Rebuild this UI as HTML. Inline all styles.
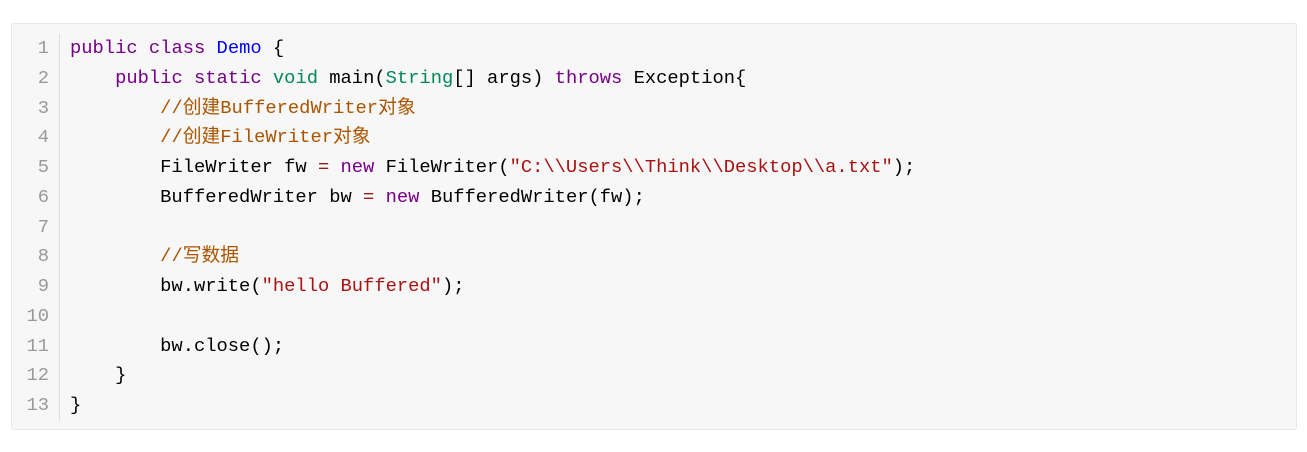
<!DOCTYPE html>
<html><head><meta charset="utf-8"><style>
body{margin:0;background:#fff;width:1307px;height:452px;overflow:hidden}
.box{position:absolute;left:11px;top:23px;width:1286px;height:407px;background:#f7f7f7;border:1px solid #e6e6e6;border-radius:3px;box-sizing:border-box}
.g{position:absolute;left:0;top:10px;width:37px;text-align:right;color:#999;}
.gl{position:absolute;left:47px;top:10px;width:1px;height:387px;background:#ddd}
.c{position:absolute;left:58px;top:10px;color:#000}
.g div,.c div{height:29.75px;line-height:29.75px;white-space:pre;font-family:"Liberation Mono","Noto Sans CJK SC",monospace;font-size:18.8px}
.k{color:#770088}.d{color:#0000ff}.t{color:#008855}.s{color:#aa1111}.m{color:#aa5500}.o{color:#981a1a}
</style></head><body><div class="box">
<div class="g"><div>1</div><div>2</div><div>3</div><div>4</div><div>5</div><div>6</div><div>7</div><div>8</div><div>9</div><div>10</div><div>11</div><div>12</div><div>13</div></div>
<div class="gl"></div>
<div class="c">
<div><span class="k">public</span> <span class="k">class</span> <span class="d">Demo</span> {</div>
<div>    <span class="k">public</span> <span class="k">static</span> <span class="t">void</span> main(<span class="t">String</span>[] args) <span class="k">throws</span> Exception{</div>
<div>        <span class="m">//创建BufferedWriter对象</span></div>
<div>        <span class="m">//创建FileWriter对象</span></div>
<div>        FileWriter fw <span class="o">=</span> <span class="k">new</span> FileWriter(<span class="s">"C:\\Users\\Think\\Desktop\\a.txt"</span>);</div>
<div>        BufferedWriter bw <span class="o">=</span> <span class="k">new</span> BufferedWriter(fw);</div>
<div> </div>
<div>        <span class="m">//写数据</span></div>
<div>        bw.write(<span class="s">"hello Buffered"</span>);</div>
<div> </div>
<div>        bw.close();</div>
<div>    }</div>
<div>}</div>
</div></div></body></html>
